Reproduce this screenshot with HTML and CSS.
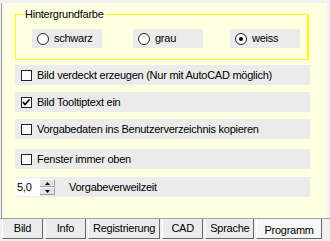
FILE: index.html
```html
<!DOCTYPE html>
<html lang="de">
<head>
  <meta charset="UTF-8">
  <title>Programm</title>
  <link rel="stylesheet" href="styles.css">
</head>
<body>
  <div class="window">
    <div class="panel-wrap">
      <div class="panel">
        <fieldset class="group">
          <legend>Hintergrundfarbe</legend>
          <div class="radios">
            <div class="radio"><span class="circle"></span>schwarz</div>
            <div class="radio"><span class="circle"></span>grau</div>
            <div class="radio"><span class="circle checked"></span>weiss</div>
          </div>
        </fieldset>

        <div class="row row-first"><span class="box"></span>Bild verdeckt erzeugen (Nur mit AutoCAD möglich)</div>
        <div class="row"><span class="box">
          <svg width="9" height="9" viewBox="0 0 9 9"><polyline points="1,4 3,6.5 7.5,1.5" fill="none" stroke="#000" stroke-width="1.7"/></svg>
        </span>Bild Tooltiptext ein</div>
        <div class="row"><span class="box"></span>Vorgabedaten ins Benutzerverzeichnis kopieren</div>
        <div class="row row-wide"><span class="box"></span>Fenster immer oben</div>
        <div class="row row-spin">
          <div class="spin">
            <span class="spin-value">5,0</span>
            <span class="spin-buttons">
              <span class="spin-btn"><svg width="5" height="3" viewBox="0 0 5 3"><polygon points="2.5,0 5,3 0,3" fill="#000"/></svg></span>
              <span class="spin-btn"><svg width="5" height="3" viewBox="0 0 5 3"><polygon points="0,0 5,0 2.5,3" fill="#000"/></svg></span>
            </span>
          </div>
          <span class="spin-label">Vorgabeverweilzeit</span>
        </div>
      </div>
    </div>

    <div class="tabs">
      <div class="tab">Bild</div>
      <div class="tab">Info</div>
      <div class="tab">Registrierung</div>
      <div class="tab">CAD</div>
      <div class="tab">Sprache</div>
      <div class="tab tab-active">Programm</div>
    </div>
  </div>
</body>
</html>
```

FILE: styles.css
```css
body {
  margin: 0;
  width: 330px;
  height: 241px;
  overflow: hidden;
  background-color: #f0f0f0;
  color: #000000;
  font-family: "Liberation Sans", Arial, sans-serif;
  font-size: 11px;
  letter-spacing: -0.25px;
  line-height: 13px;
}

.window {
  display: flex;
  flex-direction: column;
  height: 241px;
  padding-top: 3px;
  box-sizing: border-box;
}

.panel-wrap {
  margin-left: 1px;
  margin-right: 3px;
  padding-left: 1px;
  border-left: 1px solid #a0a0a0;
}

.panel {
  height: 215px;
  background-color: #ffffe1;
  display: flex;
  flex-direction: column;
  align-items: flex-start;
}

.group {
  margin: 4px 0 0 12px;
  padding: 0 0 11px 16px;
  width: 294px;
  box-sizing: border-box;
  border: 1px solid #ffff00;
  border-right-width: 2px;
}

.group legend {
  margin-left: -9px;
  padding: 0 2px;
  line-height: 14px;
}

.radios {
  display: grid;
  grid-template-columns: 101px 97px 70px;
  margin-top: 8px;
}

.radio {
  display: flex;
  align-items: center;
  gap: 5px;
  width: 70px;
  height: 19px;
  padding-left: 5px;
  box-sizing: border-box;
  background-color: #ebebeb;
}

.circle {
  width: 12px;
  height: 12px;
  box-sizing: border-box;
  border: 1px solid #222222;
  border-radius: 50%;
  background-color: #ffffff;
  display: flex;
  align-items: center;
  justify-content: center;
}

.circle.checked::after {
  content: "";
  width: 4px;
  height: 4px;
  border-radius: 50%;
  background-color: #000000;
}

.row {
  display: flex;
  align-items: center;
  gap: 5px;
  width: 295px;
  height: 20px;
  margin: 7px 0 0 12px;
  padding-left: 6px;
  box-sizing: border-box;
  background-color: #ebebeb;
}

.row-first {
  margin-top: 5px;
}

.row-wide {
  margin-top: 10px;
}

.row-spin {
  margin-top: 8px;
  padding-left: 0;
  gap: 14px;
}

.box {
  width: 11px;
  height: 11px;
  box-sizing: border-box;
  border: 1px solid #222222;
  background-color: #ffffff;
  display: flex;
  align-items: center;
  justify-content: center;
}

.spin {
  display: flex;
  height: 18px;
}

.spin-value {
  width: 25px;
  padding-left: 2px;
  box-sizing: border-box;
  background-color: #ffffff;
  display: flex;
  align-items: center;
}

.spin-buttons {
  display: flex;
  flex-direction: column;
  width: 15px;
  padding: 1px 0;
  box-sizing: border-box;
}

.spin-btn {
  flex: 1;
  display: flex;
  align-items: center;
  justify-content: center;
  background-color: #e3e3e3;
  border-bottom: 1px solid #a0a0a0;
  border-right: 1px solid #a0a0a0;
  border-top: 1px solid #ffffff;
}

.tabs {
  display: flex;
  gap: 2px;
  padding-left: 2px;
  border-top: 1px solid #a0a0a0;
}

.tab {
  min-width: 41px;
  height: 20px;
  padding: 0 4px;
  box-sizing: border-box;
  display: flex;
  align-items: center;
  justify-content: center;
  background-color: #ececec;
  border-left: 1px solid #ffffff;
  border-right: 1px solid #696969;
  border-bottom: 1px solid #696969;
}

.tab-active {
  padding: 3px 7px 0;
  background-color: #f7f7f7;
}
```
